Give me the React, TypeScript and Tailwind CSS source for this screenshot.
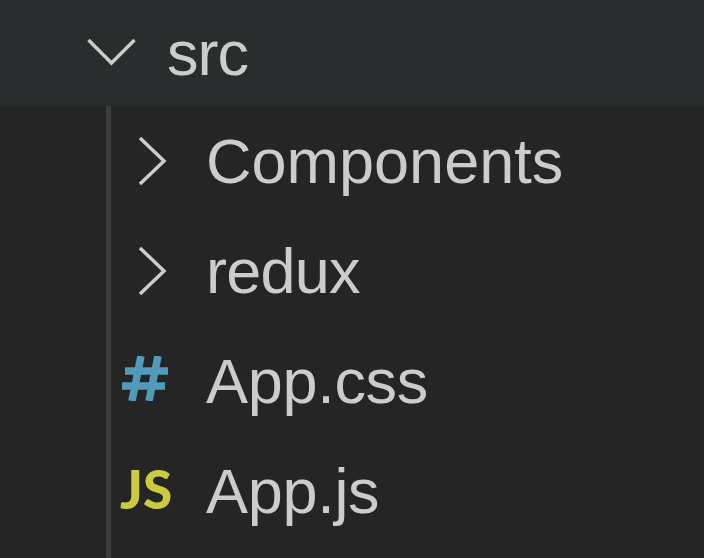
import React from "react";

const sans = { fontFamily: '"Liberation Sans", Arial, sans-serif' };

const Chevron = ({ down }: { down?: boolean }) => (
  <svg width="50" height="50" viewBox="0 0 50 50" fill="none" stroke="#cccccc" strokeWidth="3.5">
    {down ? <path d="M2.5 12 L25.5 35 L48.5 12" /> : <path d="M12 2 L36 25 L12 48" />}
  </svg>
);

const CssIcon = () => (
  <svg width="46" height="45" viewBox="0 0 46 45" fill="none" stroke="#519aba" strokeWidth="7.5">
    <path d="M19 0 L10 45" />
    <path d="M36 0 L27 45" />
    <path d="M3 15 L46 15" />
    <path d="M0 30 L43 30" />
  </svg>
);

const Row = ({
  icon,
  pad,
  label,
  tracking = "",
}: {
  icon: React.ReactNode;
  pad: string;
  label: string;
  tracking?: string;
}) => (
  <div className="flex h-[110px] items-center">
    <div className={`flex w-[95px] shrink-0 items-center ${pad}`}>{icon}</div>
    <span className={`text-[63px] text-[#cccccc] leading-none ${tracking}`} style={sans}>{label}</span>
  </div>
);

export default function App() {
  return (
    <div className="w-[704px] h-[558px] bg-[#252526] overflow-hidden">
      <div className="flex h-[106px] items-center bg-[#2a2d2e] pl-[86px]">
        <Chevron down />
        <span className="ml-[31px] text-[63px] tracking-[-1px] text-[#cccccc] leading-none" style={sans}>src</span>
      </div>
      <div className="ml-[106px] border-l-[5px] border-[#3c3c3c] h-[452px]">
        <Row pad="pl-[17px]" icon={<Chevron />} label="Components" />
        <Row pad="pl-[17px]" icon={<Chevron />} label="redux" tracking="tracking-[-0.8px]" />
        <Row pad="pl-[11px] mb-[6px]" icon={<CssIcon />} label="App.css" tracking="tracking-[-0.3px]" />
        <Row
          pad="pl-[9px] mb-[6px]"
          icon={
            <span
              className="text-[53px] font-black text-[#cbcb41] leading-none"
              style={{ fontFamily: "Lato, sans-serif" }}
            >
              JS
            </span>
          }
          label="App.js"
          tracking="tracking-[-0.3px]"
        />
      </div>
    </div>
  );
}
